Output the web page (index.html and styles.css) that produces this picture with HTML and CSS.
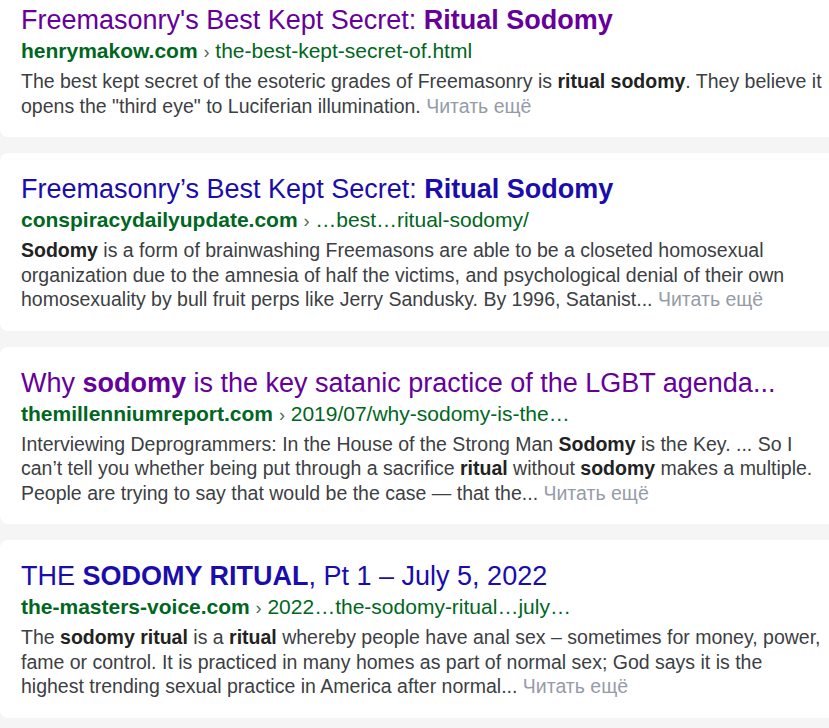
FILE: index.html
```html
<!DOCTYPE html>
<html lang="ru">
<head>
    <meta charset="UTF-8">
    <title>Результаты поиска</title>
    <link rel="stylesheet" href="styles.css">
</head>
<body>
    <div class="results">
        <div class="result">
            <a class="title visited" href="#">Freemasonry's Best Kept Secret: <b>Ritual Sodomy</b></a>
            <div class="url"><b>henrymakow.com</b> <span class="sep">›</span> the-best-kept-secret-of.html</div>
            <div class="snippet">The best kept secret of the esoteric grades of Freemasonry is <b>ritual sodomy</b>. They believe it opens the "third eye" to Luciferian illumination. <span class="more">Читать ещё</span></div>
        </div>
        <div class="result">
            <a class="title" href="#">Freemasonry’s Best Kept Secret: <b>Ritual Sodomy</b></a>
            <div class="url"><b>conspiracydailyupdate.com</b> <span class="sep">›</span> …best…ritual-sodomy/</div>
            <div class="snippet"><b>Sodomy</b> is a form of brainwashing Freemasons are able to be a closeted homosexual organization due to the amnesia of half the victims, and psychological denial of their own homosexuality by bull fruit perps like Jerry Sandusky. By 1996, Satanist... <span class="more">Читать ещё</span></div>
        </div>
        <div class="result">
            <a class="title visited" href="#">Why <b>sodomy</b> is the key satanic practice of the LGBT agenda...</a>
            <div class="url"><b>themillenniumreport.com</b> <span class="sep">›</span> 2019/07/why-sodomy-is-the…</div>
            <div class="snippet">Interviewing Deprogrammers: In the House of the Strong Man <b>Sodomy</b> is the Key. ... So I can’t tell you whether being put through a sacrifice <b>ritual</b> without <b>sodomy</b> makes a multiple. People are trying to say that would be the case — that the... <span class="more">Читать ещё</span></div>
        </div>
        <div class="result">
            <a class="title" href="#">THE <b>SODOMY RITUAL</b>, Pt 1 – July 5, 2022</a>
            <div class="url"><b>the-masters-voice.com</b> <span class="sep">›</span> 2022…the-sodomy-ritual…july…</div>
            <div class="snippet">The <b>sodomy ritual</b> is a <b>ritual</b> whereby people have anal sex – sometimes for money, power, fame or control. It is practiced in many homes as part of normal sex; God says it is the highest trending sexual practice in America after normal... <span class="more">Читать ещё</span></div>
        </div>
    </div>
</body>
</html>
```

FILE: styles.css
```css
body {
    font-family: 'Liberation Sans', Arial, sans-serif;
    margin: 0;
    padding: 0;
    background-color: #f5f5f5;
    overflow: hidden;
}
.results {
    display: flex;
    flex-direction: column;
    gap: 16px;
    margin-top: -16px;
}
.result {
    background: #fff;
    border-radius: 8px 0 0 8px;
    padding: 21px 6px 19px 21px;
}
.title {
    display: block;
    font-size: 27px;
    line-height: 30px;
    color: #1a0dab;
    text-decoration: none;
}
.title.visited {
    color: #660099;
}
.url {
    margin-top: 4px;
    font-size: 21px;
    line-height: 24px;
    color: #006621;
}
.url .sep {
    color: #4d6b55;
    font-size: 18px;
}
.snippet {
    margin-top: 5px;
    font-size: 19.5px;
    line-height: 24.5px;
    color: #3c4043;
}
.snippet b {
    color: #222;
}
.more {
    color: #969ba8;
}
```
